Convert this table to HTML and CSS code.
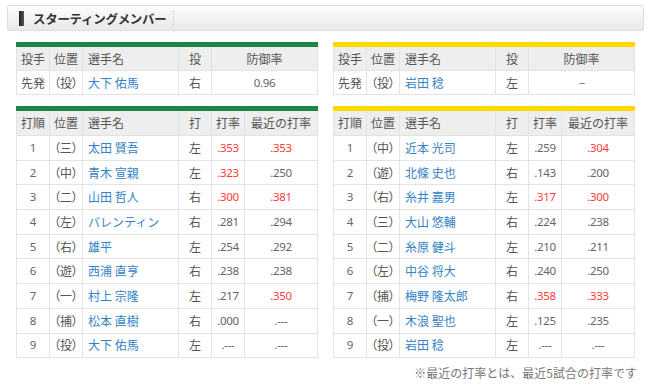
FILE: index.html
```html
<!DOCTYPE html>
<html lang="ja">
<head>
<meta charset="utf-8">
<link rel="stylesheet" href="styles.css">
</head>
<body>
<div class="page">
  <div class="heading">
    <span class="heading-mark"></span>
    <span class="heading-text">スターティングメンバー</span>
    <span class="heading-sep"></span>
  </div>
  <div class="teams">
    <div class="team">
      <table class="tbl green">
        <colgroup><col class="c33"><col class="c33"><col class="c96"><col class="c33"><col></colgroup>
        <tr class="hd"><th>投手</th><th>位置</th><th class="name">選手名</th><th>投</th><th>防御率</th></tr>
        <tr><td>先発</td><td class="pos">（投）</td><td class="name">大下 佑馬</td><td>右</td><td class="num">0.96</td></tr>
      </table>
      <table class="tbl green bat">
        <colgroup><col class="c33"><col class="c33"><col class="c96"><col class="c33"><col class="c33"><col></colgroup>
        <tr class="hd"><th>打順</th><th>位置</th><th class="name">選手名</th><th>打</th><th>打率</th><th>最近の打率</th></tr>
        <tr><td class="num">1</td><td class="pos">（三）</td><td class="name">太田 賢吾</td><td>左</td><td class="num red">.353</td><td class="num red">.353</td></tr>
        <tr><td class="num">2</td><td class="pos">（中）</td><td class="name">青木 宣親</td><td>左</td><td class="num red">.323</td><td class="num">.250</td></tr>
        <tr><td class="num">3</td><td class="pos">（二）</td><td class="name">山田 哲人</td><td>右</td><td class="num red">.300</td><td class="num red">.381</td></tr>
        <tr><td class="num">4</td><td class="pos">（左）</td><td class="name">バレンティン</td><td>右</td><td class="num">.281</td><td class="num">.294</td></tr>
        <tr><td class="num">5</td><td class="pos">（右）</td><td class="name">雄平</td><td>左</td><td class="num">.254</td><td class="num">.292</td></tr>
        <tr><td class="num">6</td><td class="pos">（遊）</td><td class="name">西浦 直亨</td><td>右</td><td class="num">.238</td><td class="num">.238</td></tr>
        <tr><td class="num">7</td><td class="pos">（一）</td><td class="name">村上 宗隆</td><td>左</td><td class="num">.217</td><td class="num red">.350</td></tr>
        <tr><td class="num">8</td><td class="pos">（捕）</td><td class="name">松本 直樹</td><td>右</td><td class="num">.000</td><td class="num">.---</td></tr>
        <tr><td class="num">9</td><td class="pos">（投）</td><td class="name">大下 佑馬</td><td>左</td><td class="num">.---</td><td class="num">.---</td></tr>
      </table>
    </div>
    <div class="team">
      <table class="tbl yellow">
        <colgroup><col class="c33"><col class="c33"><col class="c96"><col class="c33"><col></colgroup>
        <tr class="hd"><th>投手</th><th>位置</th><th class="name">選手名</th><th>投</th><th>防御率</th></tr>
        <tr><td>先発</td><td class="pos">（投）</td><td class="name">岩田 稔</td><td>左</td><td class="num">－</td></tr>
      </table>
      <table class="tbl yellow bat">
        <colgroup><col class="c33"><col class="c33"><col class="c96"><col class="c33"><col class="c33"><col></colgroup>
        <tr class="hd"><th>打順</th><th>位置</th><th class="name">選手名</th><th>打</th><th>打率</th><th>最近の打率</th></tr>
        <tr><td class="num">1</td><td class="pos">（中）</td><td class="name">近本 光司</td><td>左</td><td class="num">.259</td><td class="num red">.304</td></tr>
        <tr><td class="num">2</td><td class="pos">（遊）</td><td class="name">北條 史也</td><td>右</td><td class="num">.143</td><td class="num">.200</td></tr>
        <tr><td class="num">3</td><td class="pos">（右）</td><td class="name">糸井 嘉男</td><td>左</td><td class="num red">.317</td><td class="num red">.300</td></tr>
        <tr><td class="num">4</td><td class="pos">（三）</td><td class="name">大山 悠輔</td><td>右</td><td class="num">.224</td><td class="num">.238</td></tr>
        <tr><td class="num">5</td><td class="pos">（二）</td><td class="name">糸原 健斗</td><td>左</td><td class="num">.210</td><td class="num">.211</td></tr>
        <tr><td class="num">6</td><td class="pos">（左）</td><td class="name">中谷 将大</td><td>右</td><td class="num">.240</td><td class="num">.250</td></tr>
        <tr><td class="num">7</td><td class="pos">（捕）</td><td class="name">梅野 隆太郎</td><td>右</td><td class="num red">.358</td><td class="num red">.333</td></tr>
        <tr><td class="num">8</td><td class="pos">（一）</td><td class="name">木浪 聖也</td><td>左</td><td class="num">.125</td><td class="num">.235</td></tr>
        <tr><td class="num">9</td><td class="pos">（投）</td><td class="name">岩田 稔</td><td>左</td><td class="num">.---</td><td class="num">.---</td></tr>
      </table>
      <p class="note">※最近の打率とは、最近5試合の打率です</p>
    </div>
  </div>
</div>
</body>
</html>
```
FILE: styles.css
```css
html, body {
  margin: 0;
  padding: 0;
  background: #fff;
}
body {
  font-family: "Noto Sans CJK JP", "Noto Sans", sans-serif;
  color: #555;
}
.page {
  padding: 5px 6px 0 7px;
}
.heading {
  display: flex;
  align-items: center;
  height: 24px;
  border: 1px solid #dedede;
  border-radius: 2px;
  background: linear-gradient(#fdfdfd 0%, #f3f3f3 45%, #e9e9e9 100%);
  padding-left: 11px;
}
.heading-mark {
  width: 5px;
  height: 15px;
  background: linear-gradient(90deg, #222, #555);
  margin-right: 9px;
}
.heading-text {
  font-size: 12.5px;
  font-weight: bold;
  color: #333;
  letter-spacing: -0.3px;
}
.heading-sep {
  width: 0;
  height: 14px;
  border-left: 1px dotted #c8c8c8;
  margin-left: 7px;
}
.teams {
  display: grid;
  grid-template-columns: 302px 302px;
  column-gap: 15px;
  padding: 11px 0 0 9px;
}
.team {
  display: flex;
  flex-direction: column;
  gap: 11px;
}
.tbl {
  width: 302px;
  border-collapse: collapse;
  table-layout: fixed;
  font-size: 12px;
}
.tbl.green { border-top: 5px solid #1d8449; }
.tbl.yellow { border-top: 5px solid #fdd700; }
.c33 { width: 33px; }
.c96 { width: 96px; }
.tbl th, .tbl td {
  border: 1px solid #e3e3e3;
  height: 23px;
  padding: 0;
  text-align: center;
  font-weight: normal;
  white-space: nowrap;
  line-height: 14px;
}
.tbl .hd th {
  background: #eeeeee;
  color: #555;
}
.tbl td.pos {
  font-feature-settings: "palt";
  letter-spacing: 0;
}
.tbl td.name, .tbl th.name {
  text-align: left;
  padding-left: 5px;
}
.tbl td.name {
  color: #3583c4;
}
.tbl td.num {
  font-family: "Noto Sans", "DejaVu Sans", sans-serif;
  font-size: 11.5px;
  letter-spacing: -0.3px;
  color: #666;
}
.tbl td.red {
  color: #ff3b3b;
}
.bat .hd th {
  height: 24px;
}
.bat td {
  height: 23.7px;
}
.note {
  margin: -5px -2px 0 0;
  font-size: 12px;
  color: #777;
  text-align: right;
}
```
